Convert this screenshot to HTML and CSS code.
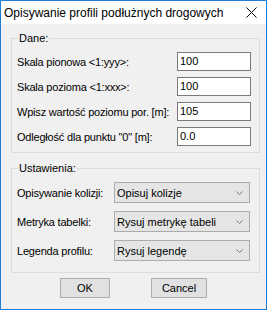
FILE: index.html
```html
<!doctype html>
<html lang="pl">
<head>
  <meta charset="UTF-8">
  <title>Opisywanie profili podłużnych drogowych</title>
  <link rel="stylesheet" href="styles.css">
</head>
<body>
<div class="window">
  <div class="titlebar">
    <span class="title">Opisywanie profili podłużnych drogowych</span>
    <svg class="close" width="11" height="11" viewBox="0 0 11 11">
      <path d="M0.5 0.5 L10.5 10.5 M10.5 0.5 L0.5 10.5" stroke="#000" stroke-width="1" fill="none"/>
    </svg>
  </div>

  <div class="content">
    <div class="group group-dane">
      <span class="group-title">Dane:</span>
      <div class="row">
        <label>Skala pionowa &lt;1:yyy&gt;:</label>
        <div class="textbox">100</div>
      </div>
      <div class="row">
        <label>Skala pozioma &lt;1:xxx&gt;:</label>
        <div class="textbox">100</div>
      </div>
      <div class="row">
        <label>Wpisz wartość poziomu por. [m]:</label>
        <div class="textbox">105</div>
      </div>
      <div class="row">
        <label>Odległość dla punktu "0" [m]:</label>
        <div class="textbox">0.0</div>
      </div>
    </div>

    <div class="group group-ust">
      <span class="group-title">Ustawienia:</span>
      <div class="row row-combo">
        <label>Opisywanie kolizji:</label>
        <div class="combo"><span>Opisuj kolizje</span><svg width="7" height="4" viewBox="0 0 7 4"><polyline points="0.5,0.5 3.5,3.5 6.5,0.5" stroke="#777" fill="none"/></svg></div>
      </div>
      <div class="row row-combo">
        <label>Metryka tabelki:</label>
        <div class="combo"><span>Rysuj metrykę tabeli</span><svg width="7" height="4" viewBox="0 0 7 4"><polyline points="0.5,0.5 3.5,3.5 6.5,0.5" stroke="#777" fill="none"/></svg></div>
      </div>
      <div class="row row-combo">
        <label>Legenda profilu:</label>
        <div class="combo"><span>Rysuj legendę</span><svg width="7" height="4" viewBox="0 0 7 4"><polyline points="0.5,0.5 3.5,3.5 6.5,0.5" stroke="#777" fill="none"/></svg></div>
      </div>
    </div>

    <div class="buttons">
      <button class="btn btn-ok">OK</button>
      <button class="btn btn-cancel">Cancel</button>
    </div>
  </div>
</div>
</body>
</html>
```

FILE: styles.css
```css
body {
  margin: 0;
  font-family: "Liberation Sans", Arial, sans-serif;
  font-size: 11px;
  color: #000;
}
.window {
  width: 267px;
  height: 310px;
  box-sizing: border-box;
  border: 1px solid #1c7fd6;
  background: #f0f0f0;
  display: flex;
  flex-direction: column;
}
.titlebar {
  height: 23px;
  background: #fff;
  display: flex;
  align-items: center;
  justify-content: space-between;
  padding: 0 9px 0 3px;
}
.title {
  font-size: 12px;
  line-height: 14px;
}
.close {
  display: block;
}
.content {
  padding: 14px 6px 0 10px;
}
.group {
  border: 1px solid #dcdcdc;
  position: relative;
}
.group-title {
  position: absolute;
  top: -7px;
  left: 6px;
  line-height: 13px;
  padding: 0 1px;
  background: #f0f0f0;
}
.group-dane {
  padding: 13px 8px 6px 5px;
}
.group-ust {
  margin-top: 15px;
  padding: 13px 9px 11px 5px;
}
.row {
  display: flex;
  align-items: center;
  justify-content: space-between;
  height: 19px;
}
.row + .row {
  margin-top: 6px;
}
.row label {
  letter-spacing: -0.2px;
}
.textbox {
  width: 74px;
  height: 19px;
  box-sizing: border-box;
  border: 1px solid #7a7a7a;
  background: #fff;
  padding-left: 2px;
  line-height: 17px;
}
.row-combo {
  height: 21px;
}
.row-combo + .row-combo {
  margin-top: 8px;
}
.combo {
  width: 136px;
  height: 21px;
  box-sizing: border-box;
  border: 1px solid #acacac;
  background: #e5e5e5;
  display: flex;
  align-items: center;
  justify-content: space-between;
  padding: 0 6px 0 2px;
}
.combo svg {
  display: block;
}
.buttons {
  display: flex;
  margin-top: 5px;
  padding-left: 49px;
}
.btn {
  height: 20px;
  margin: 0;
  padding: 0;
  border: 1px solid #adadad;
  background: #e1e1e1;
  font-family: "Liberation Sans", Arial, sans-serif;
  font-size: 11px;
  color: #000;
}
.btn-ok {
  width: 50px;
}
.btn-cancel {
  width: 56px;
  margin-left: 41px;
}
```
